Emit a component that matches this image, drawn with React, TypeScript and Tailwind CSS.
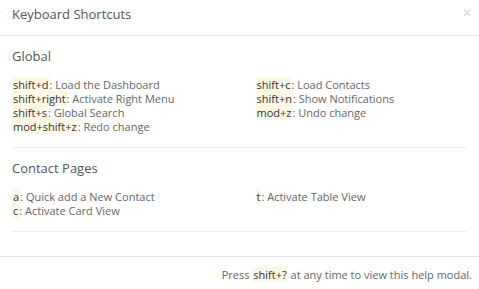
import React from "react";

const K = ({ k }: { k: string }) => (
  <span className="bg-[#fcf8e3] text-[#333] px-[1px]">{k}</span>
);

const Row = ({ k, d }: { k: string; d: string }) => (
  <div className="leading-[14px] h-[14px] whitespace-nowrap">
    <K k={k} />
    <span className="text-[#666]">: {d}</span>
  </div>
);

export default function App() {
  return (
    <div
      className="w-[479px] h-[289px] bg-white text-[#555] overflow-hidden flex flex-col"
      style={{ fontFamily: '"Open Sans", sans-serif' }}
    >
      <div className="h-[36px] border-b border-[#e5e5e5] flex items-center justify-between pl-[12px] pr-[8px]">
        <div className="text-[13px] text-[#555] -mt-[6px]">Keyboard Shortcuts</div>
        <div className="text-[14px] text-[#ccc] -mt-[10px] leading-none">×</div>
      </div>
      <div className="px-[12px] flex-1">
        <div className="text-[13px] mt-[10px] leading-[20px] text-[#555]">Global</div>
        <div className="grid grid-cols-2 mt-[12px] text-[11px] pb-[13px] border-b border-[#eee]">
          <div>
            <Row k="shift+d" d="Load the Dashboard" />
            <Row k="shift+right" d="Activate Right Menu" />
            <Row k="shift+s" d="Global Search" />
            <Row k="mod+shift+z" d="Redo change" />
          </div>
          <div className="pl-[16px]">
            <Row k="shift+c" d="Load Contacts" />
            <Row k="shift+n" d="Show Notifications" />
            <Row k="mod+z" d="Undo change" />
          </div>
        </div>
        <div className="text-[13px] mt-[10px] leading-[20px] text-[#555]">Contact Pages</div>
        <div className="grid grid-cols-2 mt-[12px] text-[11px] pb-[13px] border-b border-[#eee]">
          <div>
            <Row k="a" d="Quick add a New Contact" />
            <Row k="c" d="Activate Card View" />
          </div>
          <div className="pl-[16px]">
            <Row k="t" d="Activate Table View" />
          </div>
        </div>
      </div>
      <div className="h-[33px] border-t border-[#e5e5e5] flex items-center justify-end pr-[7px] pt-[4px] text-[11px] text-[#666]">
        <span>
          Press <K k="shift+?" /> at any time to view this help modal.
        </span>
      </div>
    </div>
  );
}
